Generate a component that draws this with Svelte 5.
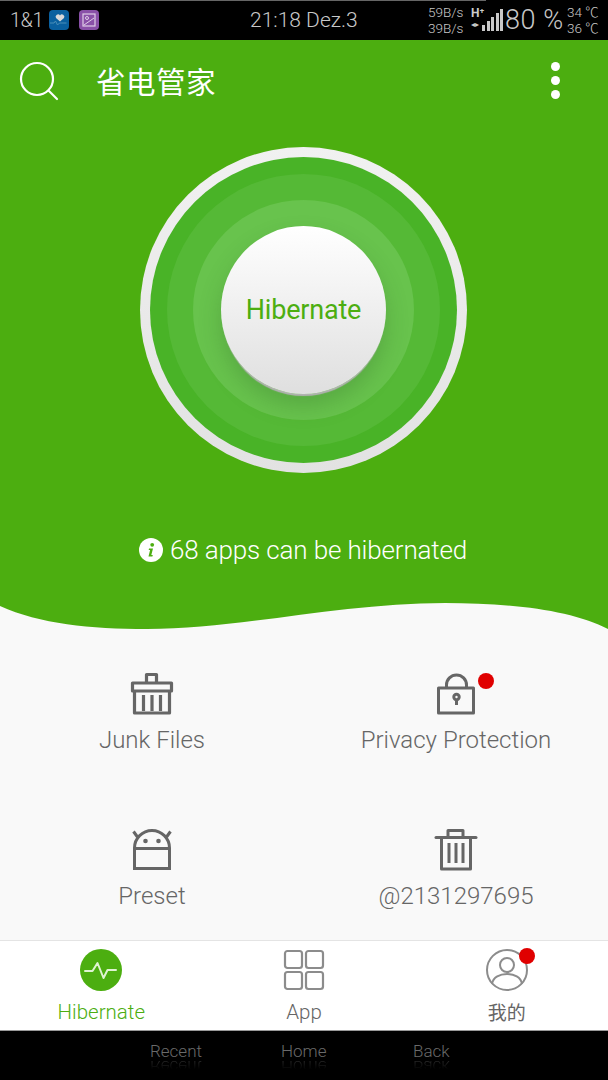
<script>
  const tools = [
    { label: 'Junk Files', icon: 'junk' },
    { label: 'Privacy Protection', icon: 'lock', dot: true },
    { label: 'Preset', icon: 'android' },
    { label: '@2131297695', icon: 'trash' }
  ];
  const navItems = ['Recent', 'Home', 'Back'];
  const bars = [6, 10, 14, 18, 22];
</script>

<div class="phone">
  <div class="status">
    <span class="carrier">1&amp;1</span>
    <span class="notif blue">
      <svg width="20" height="20" viewBox="0 0 20 20"><path d="M11 11.500 7 8a2.300 2.300 0 0 1 4-2.400A2.300 2.300 0 0 1 15 8z" fill="#d8d8d8"/><path d="M1 13h4l1.500-2 2 4 2-2h7" fill="none" stroke="#4b8fb8" stroke-width="1"/></svg>
    </span>
    <span class="notif purple">
      <svg width="20" height="20" viewBox="0 0 20 20"><rect x="4" y="4" width="12" height="12" fill="none" stroke="#e0cde8" stroke-width="1.200"/><circle cx="8" cy="8" r="1.500" fill="none" stroke="#e0cde8"/><path d="m5 15 10-7" stroke="#e0cde8"/></svg>
    </span>
    <span class="clock">21:18 Dez.3</span>
    <span class="speed"><span>59B/s</span><span>39B/s</span></span>
    <span class="net"><b>H⁺</b><i>◂▸</i></span>
    <span class="bars">
      {#each bars as h}<span style="height:{h}px"></span>{/each}
    </span>
    <span class="battery">80 %</span>
    <span class="temps"><span>34 ℃</span><span>36 ℃</span></span>
  </div>

  <section class="hero">
    <header class="topbar">
      <svg class="search" width="40" height="42" viewBox="0 0 40 42">
        <circle cx="18" cy="19" r="16" fill="none" stroke="#fff" stroke-width="2.200"/>
        <path d="m30 31 8 8" stroke="#fff" stroke-width="2.200" stroke-linecap="round"/>
      </svg>
      <h1>省电管家</h1>
      <span class="more"><i></i><i></i><i></i></span>
    </header>
    <div class="dial">
      <div class="ring r0"><div class="ring r1"><div class="ring r2"><div class="ring r3">
        <button class="go">Hibernate</button>
      </div></div></div></div>
    </div>
    <p class="info">
      <svg width="24" height="24" viewBox="0 0 24 24">
        <circle cx="12" cy="12" r="12" fill="#fff"/>
        <circle cx="13.200" cy="6.800" r="1.900" fill="#4cae10"/>
        <path d="M10 10.500h4l-1.700 6.500h1.500l-.4 1.500H9.500l1.600-6.500H9.700z" fill="#4cae10"/>
      </svg>
      <span>68 apps can be hibernated</span>
    </p>
  </section>

  <svg class="wave" width="608" height="32" viewBox="0 0 608 32" preserveAspectRatio="none">
    <path d="M0 0H608V29C572 10 510 3 445 3C340 3 240 29 147 29C90 29 40 24 0 6Z" fill="#4cae10"/>
  </svg>

  <main class="tools">
    {#each tools as t}
      <div class="tool">
        <span class="glyph">
          {#if t.icon === 'junk'}
            <svg width="44" height="44" viewBox="0 0 44 44" fill="none" stroke="#666" stroke-width="3.200" stroke-linejoin="round">
              <path d="M16.500 10V2.500h10V10"/><rect x="2.500" y="11" width="39" height="8"/><path d="M4.500 19v22h35V19"/><path d="M13.500 23v16M22 23v16M30.500 23v16"/>
            </svg>
          {:else if t.icon === 'lock'}
            <svg width="44" height="44" viewBox="0 0 44 44" fill="none" stroke="#666" stroke-width="3" stroke-linejoin="round">
              <rect x="4.500" y="16" width="35" height="25"/><path d="M12.500 16v-3a10 10 0 0 1 20 0v3"/>
              <circle cx="22.500" cy="25" r="2.700"/><path d="M22.500 27v6"/>
            </svg>
          {:else if t.icon === 'android'}
            <svg width="44" height="44" viewBox="0 0 44 44" fill="none" stroke="#666" stroke-width="3">
              <path d="M4.500 40.500h35V20a17.500 17.500 0 0 0-35 0z"/><path d="M4 20.500h36"/><path d="m3.500 3.500 4 5.500M40.500 3.500l-4 5.500"/>
              <circle cx="15.500" cy="13" r="2.300" fill="#666" stroke="none"/><circle cx="28.500" cy="13" r="2.300" fill="#666" stroke="none"/>
            </svg>
          {:else}
            <svg width="44" height="44" viewBox="0 0 44 44" fill="none" stroke="#666" stroke-width="3" stroke-linejoin="round">
              <path d="M2 9.500h40" stroke-linecap="round"/><path d="M14 9V2.500h15V9"/><path d="M7.500 10v31h29V10"/><path d="M15 15v20M22 15v20M29 15v20"/>
            </svg>
          {/if}
          {#if t.dot}<span class="dot tool-dot"></span>{/if}
        </span>
        <span class="tool-label">{t.label}</span>
      </div>
    {/each}
  </main>

  <nav class="tabs">
    <div class="tab active">
      <svg width="44" height="44" viewBox="0 0 44 44">
        <circle cx="22" cy="22" r="21" fill="#4cae10"/>
        <path d="M6 23h7.500l5-8 6 15 4-8H37" fill="none" stroke="#dff3d2" stroke-width="2" stroke-linejoin="round" stroke-linecap="round"/>
      </svg>
      <span>Hibernate</span>
    </div>
    <div class="tab">
      <svg width="44" height="44" viewBox="0 0 44 44" fill="none" stroke="#8c8c8c" stroke-width="2.200">
        <rect x="3" y="3" width="17" height="17" rx="2.500"/><rect x="24" y="3" width="17" height="17" rx="2.500"/>
        <rect x="3" y="24" width="17" height="17" rx="2.500"/><rect x="24" y="24" width="17" height="17" rx="2.500"/>
      </svg>
      <span>App</span>
    </div>
    <div class="tab">
      <span class="glyph">
        <svg width="44" height="44" viewBox="0 0 44 44" fill="none" stroke="#8c8c8c" stroke-width="2">
          <circle cx="22" cy="22" r="20"/><circle cx="22" cy="17" r="7"/><path d="M7 36c1-7 8-10 15-10s14 3 15 10"/>
        </svg>
        <span class="dot tab-dot"></span>
      </span>
      <span class="cjk">我的</span>
    </div>
  </nav>

  <footer class="softkeys">
    {#each navItems as n}
      <span class="key">{n}<span class="mirror" aria-hidden="true">{n}</span></span>
    {/each}
  </footer>
</div>

<style>
  :global(body) { margin: 0; background: #000; }
  .phone {
    width: 608px;
    height: 1080px;
    display: flex;
    flex-direction: column;
    overflow: hidden;
    background: #f9f9f9;
    font-family: Roboto, "Noto Sans CJK SC", sans-serif;
    font-weight: 300;
  }
  .status {
    height: 40px;
    box-sizing: border-box;
    display: flex;
    align-items: center;
    background: linear-gradient(#666, #666) 0 0 / 486px 1px no-repeat #000;
    color: #c8c8c8;
    padding-left: 10px;
  }
  .carrier { font-size: 20px; width: 39px; letter-spacing: -0.5px; }
  .notif { width: 20px; height: 20px; border-radius: 4px; display: block; }
  .notif svg { display: block; }
  .blue { background: #0a609f; }
  .purple { background: #8a50a8; margin-left: 10px; }
  .clock { font-size: 21px; margin-left: 151px; width: 178px; white-space: nowrap; }
  .speed, .temps { display: flex; flex-direction: column; font-size: 13.500px; line-height: 16px; white-space: nowrap; }
  .speed { width: 43px; }
  .net { width: 11px; display: flex; flex-direction: column; line-height: 11px; font-size: 12px; color: #ccc; font-style: normal; margin-top: -3px; }
  .net b { font-weight: 700; }
  .net i { font-style: normal; font-size: 8px; }
  .bars { display: flex; align-items: flex-end; gap: 1.500px; height: 22px; width: 23px; }
  .bars span { width: 3px; background: #c8c8c8; }
  .battery { font-size: 27px; width: 62px; white-space: nowrap; letter-spacing: 0.6px; }
  .temps { font-size: 13.500px; }

  .hero {
    height: 560px;
    background: #4cae10;
    display: flex;
    flex-direction: column;
    color: #fff;
  }
  .topbar { height: 84px; display: flex; align-items: center; padding: 0 48px 0 19px; }
  .search { margin-top: -2px; flex: none; }
  h1 { margin: -4px 0 0 37px; font-size: 29.500px; font-weight: 400; letter-spacing: 0.500px; flex: 1; font-family: "Noto Sans CJK SC", sans-serif; }
  .more { display: flex; flex-direction: column; gap: 5px; margin-top: -3px; }
  .more i { width: 9px; height: 9px; border-radius: 50%; background: #fff; display: block; }
  .dial { display: flex; justify-content: center; margin-top: 23px; padding-right: 1px; }
  .ring { border-radius: 50%; display: flex; align-items: center; justify-content: center; box-sizing: border-box; flex: none; }
  .r0 { width: 327px; height: 326px; background: linear-gradient(#f1f1f1, #e2e2e2); }
  .r1 { width: 307px; height: 306px; background: #49b327; }
  .r2 { width: 273px; height: 272px; background: #55b936; }
  .r3 { width: 221px; height: 220px; background: #68c34d; }
  .go {
    width: 165px; height: 168px; border-radius: 50%; border: 0; padding: 0;
    background: linear-gradient(#fff, #dfdfdf);
    box-shadow: 0 3px 1px -1px #b2b2b2, 0 12px 22px rgba(50, 110, 40, 0.3);
    color: #4cae10; font: 400 27px Roboto, sans-serif; letter-spacing: -0.2px;
  }
  .info { margin: 62px 0 0 139px; display: flex; align-items: center; gap: 7px; font-size: 26px; white-space: nowrap; letter-spacing: -0.15px; }
  .info svg { flex: none; }
  .wave { display: block; flex: none; }

  .tools {
    height: 308px;
    box-sizing: border-box;
    display: grid;
    grid-template-columns: 304px 304px;
    grid-auto-rows: 156px;
    padding-top: 40px;
  }
  .tool { display: flex; flex-direction: column; align-items: center; }
  .glyph { position: relative; display: block; width: 44px; height: 44px; }
  .glyph svg { display: block; }
  .tool-label { margin-top: 8px; font-size: 24px; line-height: 32px; color: #666; white-space: nowrap; }
  .dot { position: absolute; width: 16px; height: 16px; border-radius: 50%; background: #e00000; }
  .tool-dot { left: 44px; top: 1px; }
  .tab-dot { left: 34px; top: 0; }

  .tabs {
    height: 91px;
    box-sizing: border-box;
    display: grid;
    grid-template-columns: repeat(3, 1fr);
    background: #fff;
    border-top: 1px solid #e4e4e4;
    border-bottom: 1px solid #999;
  }
  .tab { display: flex; flex-direction: column; align-items: center; padding-top: 7px; color: #666; font-size: 20.500px; line-height: 28px; }
  .tab > svg, .tab > .glyph { flex: none; margin-bottom: 6px; }
  .tab.active { color: #4cae10; }
  .cjk { font-family: "Noto Sans CJK SC", sans-serif; font-size: 19px; font-weight: 400; }

  .softkeys {
    flex: 1;
    background: #000;
    display: grid;
    grid-template-columns: 131px 132px auto;
    align-content: start;
    padding: 12px 0 0 150px;
    color: #6a6a6a;
    font-size: 17px;
    line-height: 16px;
  }
  .key { position: relative; }
  .mirror {
    position: absolute; left: 0; top: 16px;
    transform: scaleY(-1);
    opacity: 0.45;
    -webkit-mask-image: linear-gradient(transparent 35%, #000);
    mask-image: linear-gradient(transparent 35%, #000);
  }
</style>
